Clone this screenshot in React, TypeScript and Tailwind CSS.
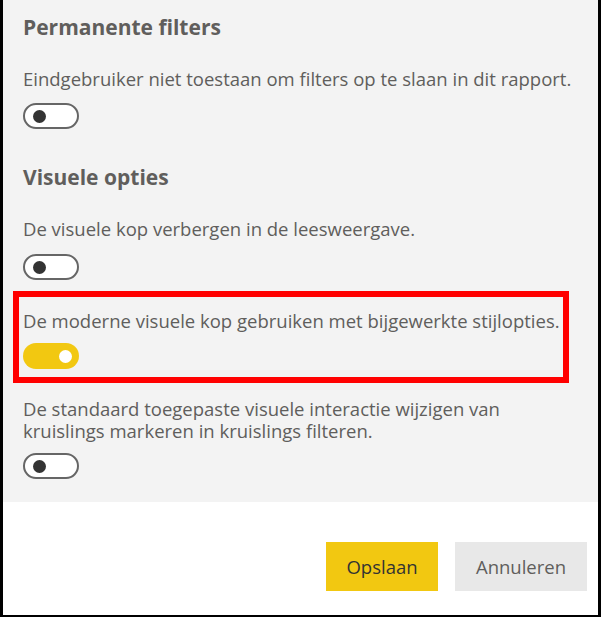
const Toggle = ({ on = false }: { on?: boolean }) =>
  on ? (
    <div className="flex h-[26px] w-[56px] items-center justify-end rounded-full bg-[#f2c811] pr-[7px]">
      <div className="h-[13px] w-[13px] rounded-full bg-white" />
    </div>
  ) : (
    <div className="flex h-[26px] w-[56px] items-center rounded-full border-2 border-[#666] bg-white pl-[8px]">
      <div className="h-[13px] w-[13px] rounded-full bg-[#333]" />
    </div>
  );

const Heading = ({ children }: { children: React.ReactNode }) => (
  <h2 className="h-[28px] text-[21px] font-bold leading-[28px] text-[#605e5c]">{children}</h2>
);

const Text = ({ children }: { children: React.ReactNode }) => (
  <p className="text-[18.5px] leading-[22px] text-[#605e5c]">{children}</p>
);

export default function App() {
  return (
    <div
      className="flex h-[617px] w-[601px] flex-col border-x-[3px] border-b-2 border-black bg-white"
      style={{ fontFamily: '"Segoe UI", "Open Sans", "Noto Sans", sans-serif' }}
    >
      <div className="bg-[#f3f3f3] pb-[23px] pl-[20px]">
        <div className="mt-[13px]">
          <Heading>Permanente filters</Heading>
        </div>
        <div className="mt-[27px]">
          <Text>Eindgebruiker niet toestaan om filters op te slaan in dit rapport.</Text>
        </div>
        <div className="mt-[13px]">
          <Toggle />
        </div>
        <div className="mt-[34px]">
          <Heading>Visuele opties</Heading>
        </div>
        <div className="mt-[27px]">
          <Text>De visuele kop verbergen in de leesweergave.</Text>
        </div>
        <div className="mt-[14px]">
          <Toggle />
        </div>
        <div className="ml-[-10px] mt-[11px] w-[556px] border-[6px] border-[#ff0000] pb-[8px] pl-[4px] pt-[13px]">
          <Text>De moderne visuele kop gebruiken met bijgewerkte stijlopties.</Text>
          <div className="mt-[11px]">
            <Toggle on />
          </div>
        </div>
        <div className="mt-[15px]">
          <Text>
            De standaard toegepaste visuele interactie wijzigen van
            <br />
            kruislings markeren in kruislings filteren.
          </Text>
        </div>
        <div className="mt-[11px]">
          <Toggle />
        </div>
      </div>
      <div className="flex flex-1 justify-end gap-[17px] pr-[11px] pt-[40px]">
        <button className="h-[49px] w-[112px] bg-[#f2c811] text-[18.5px] text-[#333]">Opslaan</button>
        <button className="h-[49px] w-[132px] bg-[#e8e8e8] text-[18.5px] text-[#605e5c]">Annuleren</button>
      </div>
    </div>
  );
}
